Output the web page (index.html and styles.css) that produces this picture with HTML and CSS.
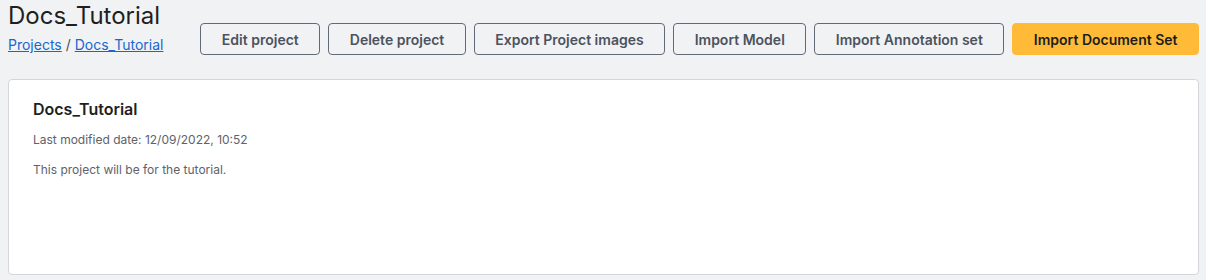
FILE: index.html
```html
<!DOCTYPE html>
<html>
<head>
<meta charset="utf-8">
<link rel="stylesheet" href="styles.css">
</head>
<body>
<div class="page">
  <header class="header">
    <div class="heading">
      <h1 class="title">Docs_Tutorial</h1>
      <nav class="crumbs"><a href="#">Projects</a> / <a href="#">Docs_Tutorial</a></nav>
    </div>
    <div class="actions">
      <button class="btn">Edit project</button>
      <button class="btn">Delete project</button>
      <button class="btn">Export Project images</button>
      <button class="btn">Import Model</button>
      <button class="btn">Import Annotation set</button>
      <button class="btn btn-primary">Import Document Set</button>
    </div>
  </header>
  <section class="card">
    <h2 class="card-title">Docs_Tutorial</h2>
    <p class="meta">Last modified date: 12/09/2022, 10:52</p>
    <p class="desc">This project will be for the tutorial.</p>
  </section>
</div>
</body>
</html>
```

FILE: styles.css
```css
* { box-sizing: border-box; }
html, body { margin: 0; padding: 0; }
body {
  background: #f1f2f4;
  font-family: Inter, "Noto Sans", sans-serif;
  color: #222;
  height: 280px;
  overflow: hidden;
}
.page {
  padding: 2px 7px 0 8px;
}
.header {
  display: flex;
  justify-content: space-between;
  align-items: flex-start;
}
.title {
  margin: 0;
  font-size: 24px;
  line-height: 28px;
  font-weight: 400;
  color: #1f1f1f;
}
.crumbs {
  margin-top: 5px;
  font-size: 14px;
  line-height: 20px;
  color: #4a4f57;
}
.crumbs a {
  color: #1668d0;
  text-decoration: underline;
}
.actions {
  display: flex;
  gap: 8px;
  padding-top: 21px;
}
.btn {
  height: 32px;
  padding: 0 20.5px;
  border: 1px solid #626977;
  border-radius: 4px;
  background: transparent;
  font-family: Inter, "Noto Sans", sans-serif;
  font-size: 14px;
  font-weight: 600;
  color: #4c525e;
  cursor: pointer;
}
.btn-primary {
  background: #ffbb38;
  border-color: #ffbb38;
  color: #1d1d1d;
}
.card {
  margin-top: 24px;
  height: 196px;
  background: #fff;
  border: 1px solid #d3d6da;
  border-radius: 4px;
  padding: 17px 24px;
}
.card-title {
  margin: 0 0 10px;
  font-size: 16px;
  line-height: 24px;
  font-weight: 600;
  color: #1f1f1f;
}
.meta, .desc {
  margin: 0;
  font-size: 12px;
  line-height: 18px;
  color: #5d626b;
}
.meta { margin-top: 1px; }
.desc { margin-top: 12px; }
```
